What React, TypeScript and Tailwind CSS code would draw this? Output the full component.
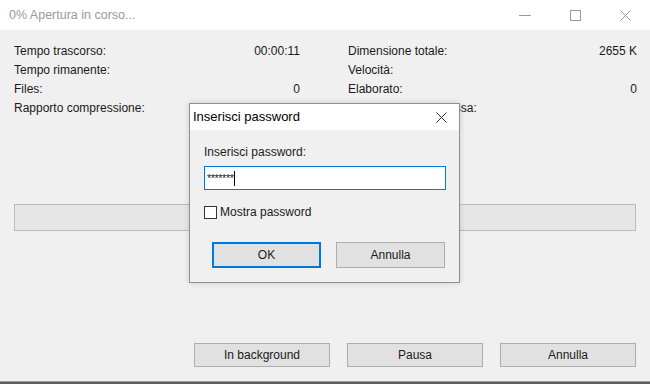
import React from "react";

const font = { fontFamily: '"Liberation Sans", Arial, sans-serif' };

function Row({ label, value }: { label: string; value?: string }) {
  return (
    <div className="flex h-[19px] items-center justify-between leading-[19px]">
      <span>{label}</span>
      <span>{value ?? ""}</span>
    </div>
  );
}

function Btn({ children, w }: { children: React.ReactNode; w: string }) {
  return (
    <div
      className={`${w} flex h-[24px] items-center justify-center border border-[#adadad] bg-[#e1e1e1] text-[12px] text-[#1a1a1a]`}
    >
      {children}
    </div>
  );
}

export default function App() {
  return (
    <div
      className="relative flex h-[384px] w-[650px] flex-col overflow-hidden bg-[#f0f0f0] text-[12px] text-[#1a1a1a]"
      style={font}
    >
      {/* Title bar */}
      <div className="flex h-[30px] shrink-0 items-center bg-white">
        <span className="ml-[9px] text-[12.5px] text-[#9a9a9a]">0% Apertura in corso...</span>
        <div className="ml-auto flex h-full items-center">
          <div className="flex h-full w-[50px] items-center justify-center">
            <svg width="12" height="10" viewBox="0 0 12 10">
              <line x1="0" y1="5.5" x2="12" y2="5.5" stroke="#9a9a9a" strokeWidth="1" />
            </svg>
          </div>
          <div className="flex h-full w-[50px] items-center justify-center">
            <svg width="11" height="11" viewBox="0 0 11 11">
              <rect x="0.5" y="0.5" width="10" height="10" fill="none" stroke="#9a9a9a" strokeWidth="1" />
            </svg>
          </div>
          <div className="flex h-full w-[50px] items-center justify-center">
            <svg width="11" height="11" viewBox="0 0 11 11">
              <line x1="0.5" y1="0.5" x2="10.5" y2="10.5" stroke="#9a9a9a" strokeWidth="1" />
              <line x1="10.5" y1="0.5" x2="0.5" y2="10.5" stroke="#9a9a9a" strokeWidth="1" />
            </svg>
          </div>
        </div>
      </div>

      {/* Body */}
      <div className="flex flex-1 flex-col">
        <div className="flex pl-[14px] pr-[13px] pt-[12px]">
          <div className="w-[286px]">
            <Row label="Tempo trascorso:" value="00:00:11" />
            <Row label="Tempo rimanente:" />
            <Row label="Files:" value="0" />
            <Row label="Rapporto compressione:" />
          </div>
          <div className="ml-[48px] w-[289px]">
            <Row label="Dimensione totale:" value="2655 K" />
            <Row label="Velocità:" />
            <Row label="Elaborato:" value="0" />
            <Row label="Dimensione compressa:" />
          </div>
        </div>

        {/* progress bar */}
        <div className="mx-[14px] mt-[86px] h-[27px] border border-[#bcbcbc] bg-[#e6e6e6]" />

        {/* bottom buttons */}
        <div className="mt-[112px] flex justify-end gap-[17px] pr-[14px]">
          <Btn w="w-[136px]">In background</Btn>
          <Btn w="w-[136px]">Pausa</Btn>
          <Btn w="w-[136px]">Annulla</Btn>
        </div>

        <div className="mt-auto h-[3px] border-t border-[#9a9a9a] bg-[#5e5e5e]" />
      </div>

      {/* Password dialog */}
      <div className="absolute left-[189px] top-[103px] flex h-[180px] w-[271px] flex-col border border-[#8f8f8f] bg-[#f0f0f0] shadow-[0_0_6px_rgba(0,0,0,0.15)]">
        <div className="flex h-[26px] shrink-0 items-center bg-white">
          <span className="ml-[3px] text-[13px] text-black">Inserisci password</span>
          <div className="ml-auto mr-[12px] flex items-center">
            <svg width="11" height="11" viewBox="0 0 11 11">
              <line x1="0.5" y1="0.5" x2="10.5" y2="10.5" stroke="#333" strokeWidth="1" />
              <line x1="10.5" y1="0.5" x2="0.5" y2="10.5" stroke="#333" strokeWidth="1" />
            </svg>
          </div>
        </div>
        <div className="flex flex-col pl-[14px] pt-[15px]">
          <div className="h-[14px] leading-[14px]">Inserisci password:</div>
          <div className="mt-[7px] flex h-[24px] w-[242px] items-center border border-[#0078d7] bg-white pl-[2px]">
            <span className="text-[11px] leading-[14px] tracking-[-0.5px]">*******</span>
            <span className="ml-[1px] h-[15px] w-[1px] bg-black" />
          </div>
          <div className="mt-[14px] flex h-[16px] items-center">
            <div className="h-[13px] w-[13px] border border-[#333] bg-white" />
            <span className="ml-[3px]">Mostra password</span>
          </div>
          <div className="mt-[22px] flex gap-[15px] pl-[8px]">
            <div className="flex h-[26px] w-[109px] items-center justify-center border-2 border-[#0078d7] bg-[#e1e1e1]">
              OK
            </div>
            <div className="flex h-[26px] w-[109px] items-center justify-center border border-[#adadad] bg-[#e1e1e1]">
              Annulla
            </div>
          </div>
        </div>
      </div>
    </div>
  );
}
